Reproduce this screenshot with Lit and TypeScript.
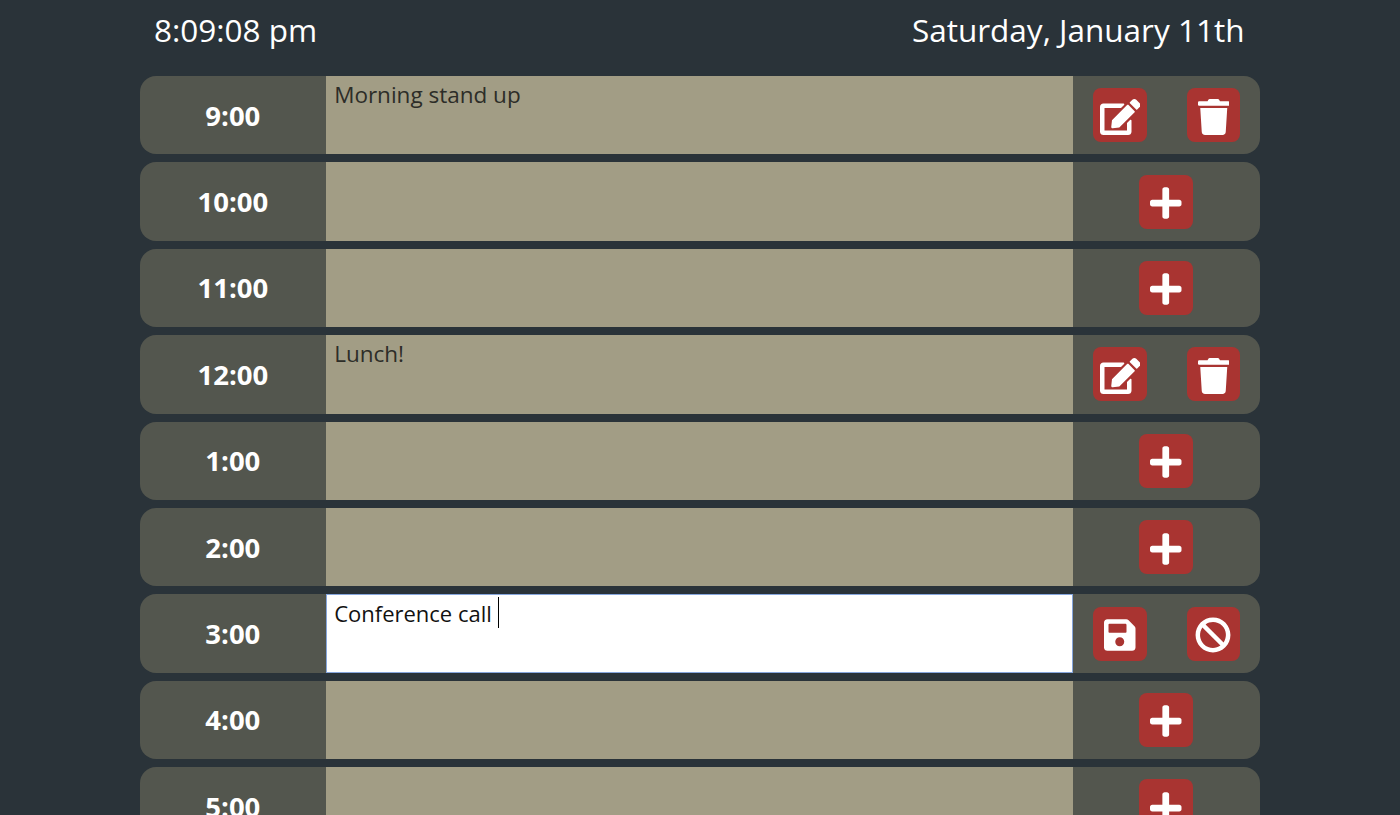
import { LitElement, html, css, svg } from "lit";
import { customElement } from "lit/decorators.js";

const icons: Record<string, [number, string]> = {
  edit: [576, "M402.6 83.2l90.2 90.2c3.8 3.8 3.8 10 0 13.8L274.4 405.6l-92.8 10.3c-12.4 1.4-22.9-9.1-21.5-21.5l10.3-92.8L388.8 83.2c3.8-3.8 10-3.8 13.8 0zm162-22.9l-48.8-48.8c-15.2-15.2-39.9-15.2-55.2 0l-35.4 35.4c-3.8 3.8-3.8 10 0 13.8l90.2 90.2c3.8 3.8 10 3.8 13.8 0l35.4-35.4c15.2-15.3 15.2-40 0-55.2zM384 346.2V448H64V128h229.8c3.2 0 6.2-1.3 8.5-3.5l40-40c7.6-7.6 2.2-20.5-8.5-20.5H48C21.5 64 0 85.5 0 112v352c0 26.5 21.5 48 48 48h352c26.5 0 48-21.5 48-48V306.2c0-10.7-12.9-16-20.5-8.5l-40 40c-2.2 2.3-3.5 5.3-3.5 8.5z"],
  trash: [448, "M432 32H312l-9.4-18.7A24 24 0 0 0 281.1 0H166.8a23.72 23.72 0 0 0-21.4 13.3L136 32H16A16 16 0 0 0 0 48v32a16 16 0 0 0 16 16h416a16 16 0 0 0 16-16V48a16 16 0 0 0-16-16zM53.2 467a48 48 0 0 0 47.9 45h245.8a48 48 0 0 0 47.9-45L416 128H32z"],
  plus: [448, "M416 208H272V64c0-17.67-14.33-32-32-32h-32c-17.67 0-32 14.33-32 32v144H32c-17.67 0-32 14.33-32 32v32c0 17.67 14.33 32 32 32h144v144c0 17.67 14.33 32 32 32h32c17.67 0 32-14.33 32-32V304h144c17.67 0 32-14.33 32-32v-32c0-17.67-14.33-32-32-32z"],
  save: [448, "M433.941 129.941l-83.882-83.882A48 48 0 0 0 316.118 32H48C21.49 32 0 53.49 0 80v352c0 26.51 21.49 48 48 48h352c26.51 0 48-21.49 48-48V163.882a48 48 0 0 0-14.059-33.941zM224 416c-35.346 0-64-28.654-64-64 0-35.346 28.654-64 64-64s64 28.654 64 64c0 35.346-28.654 64-64 64zm96-304.52V212c0 6.627-5.373 12-12 12H76c-6.627 0-12-5.373-12-12V108c0-6.627 5.373-12 12-12h228.52c3.183 0 6.235 1.264 8.485 3.515l3.48 3.48A11.996 11.996 0 0 1 320 111.48z"],
  ban: [512, "M256 8C119.034 8 8 119.033 8 256s111.034 248 248 248 248-111.034 248-248S392.967 8 256 8zm130.108 117.892c65.448 65.448 70 165.481 20.677 235.637L150.47 105.216c70.204-49.356 170.226-44.735 235.638 20.676zM125.892 386.108c-65.448-65.448-70-165.481-20.677-235.637L361.53 406.784c-70.203 49.356-170.226 44.736-235.638-20.676z"],
};

const rows: { time: string; text: string; mode: "view" | "empty" | "editing" }[] = [
  { time: "9:00", text: "Morning stand up", mode: "view" },
  { time: "10:00", text: "", mode: "empty" },
  { time: "11:00", text: "", mode: "empty" },
  { time: "12:00", text: "Lunch!", mode: "view" },
  { time: "1:00", text: "", mode: "empty" },
  { time: "2:00", text: "", mode: "empty" },
  { time: "3:00", text: "Conference call ", mode: "editing" },
  { time: "4:00", text: "", mode: "empty" },
  { time: "5:00", text: "", mode: "empty" },
];

@customElement("app-root")
export class AppRoot extends LitElement {
  static styles = css`
    :host {
      display: block;
      height: 815px;
      overflow: hidden;
      background: #2a3339;
      font-family: "Open Sans", "Noto Sans", sans-serif;
    }
    .wrap {
      width: 1120px;
      margin-left: 139.5px;
    }
    header {
      height: 76px;
      box-sizing: border-box;
      padding: 8px 15px 0 14.5px;
      display: flex;
      justify-content: space-between;
      color: #fff;
      font-size: 31.5px;
      line-height: 44px;
    }
    .list {
      display: flex;
      flex-direction: column;
      gap: 8px;
    }
    .row {
      display: grid;
      grid-template-columns: 1fr 4fr 1fr;
      height: 78.4px;
      background: #53564e;
      border-radius: 16px;
      overflow: hidden;
    }
    .time {
      display: flex;
      align-items: center;
      justify-content: center;
      color: #fff;
      font-weight: 700;
      font-size: 27.5px;
    }
    .note {
      background: #a29d85;
      color: #2d2d28;
      font-size: 22.5px;
      line-height: 32px;
      padding: 3px 8px 0;
      white-space: pre;
      box-sizing: border-box;
    }
    .note.editing {
      background: #fff;
      color: #111;
      font-size: 22px;
      box-shadow: inset 0 0 0 1px #86a6dc;
    }
    .caret {
      display: inline-block;
      width: 1px;
      height: 31px;
      background: #000;
      vertical-align: top;
    }
    .actions {
      display: flex;
      align-items: center;
      justify-content: center;
      gap: 40px;
    }
    .actions.pair {
      padding-left: 1px;
    }
    button {
      width: 53.4px;
      height: 54px;
      padding: 3px 0 0;
      box-sizing: border-box;
      border: none;
      border-radius: 8px;
      background: #a93431;
      display: flex;
      align-items: center;
      justify-content: center;
      color: #fff;
    }
    svg {
      height: 36px;
      fill: currentColor;
      display: block;
    }
  `;

  private icon(name: string) {
    const [w, d] = icons[name];
    return html`<button aria-label=${name}>
      <svg viewBox="0 0 ${w} 512" style="width:${(w / 512) * 36}px">${svg`<path d=${d}></path>`}</svg>
    </button>`;
  }

  private actions(mode: string) {
    if (mode === "view") return [this.icon("edit"), this.icon("trash")];
    if (mode === "editing") return [this.icon("save"), this.icon("ban")];
    return [this.icon("plus")];
  }

  render() {
    return html`<div class="wrap">
      <header><span>8:09:08 pm</span><span>Saturday, January 11th</span></header>
      <div class="list">
        ${rows.map(
          (r) => html`<div class="row">
            <div class="time">${r.time}</div>
            <div class="note ${r.mode === "editing" ? "editing" : ""}">${r.text}${r.mode === "editing"
              ? html`<span class="caret"></span>`
              : ""}</div>
            <div class="actions ${r.mode === "empty" ? "" : "pair"}">${this.actions(r.mode)}</div>
          </div>`
        )}
      </div>
    </div>`;
  }
}
